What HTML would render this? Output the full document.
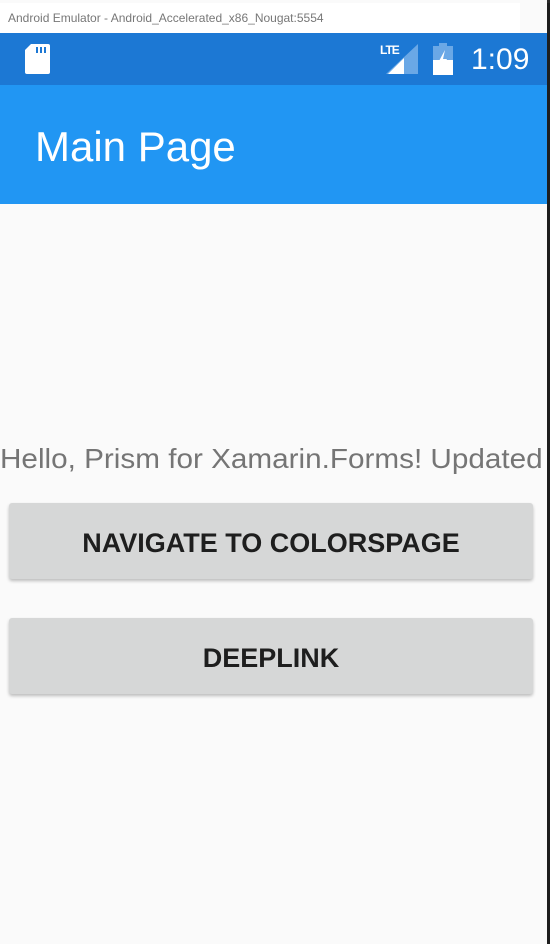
<!DOCTYPE html>
<html><head><style>
html,body{margin:0;padding:0;width:550px;height:944px;overflow:hidden;background:#1e1e1e;font-family:"Liberation Sans",sans-serif;}
#win{position:absolute;left:0;top:0;width:547px;height:944px;background:#fafafa;}
#top{position:absolute;left:0;top:0;width:550px;height:3px;background:#2b2b2b;}
#title{position:absolute;left:0;top:3px;width:520px;height:30px;background:#fff;font-size:12px;color:#777;line-height:30px;padding-left:8px;box-sizing:border-box;}
#status{position:absolute;left:0;top:33px;width:547px;height:52px;background:#1c78d4;}
#bar{position:absolute;left:0;top:85px;width:547px;height:119px;background:#2196f3;}
#bar span{position:absolute;left:35px;top:38px;font-size:42px;color:#fff;}
.time{position:absolute;left:471px;top:10px;font-size:30px;color:#fff;}
.hello{position:absolute;left:0;top:443px;font-size:28px;color:#757575;white-space:nowrap;transform:scaleX(1.06);transform-origin:left;}
.btn{position:absolute;left:9px;width:524px;height:76px;background:#d6d7d7;border-radius:3px;box-shadow:0 2px 3px rgba(0,0,0,.25);text-align:center;line-height:80px;font-size:27px;color:#1e1e1e;font-weight:bold;}
</style></head><body>
<div id="top"></div>
<div id="win">
<div id="title">Android Emulator - Android_Accelerated_x86_Nougat:5554</div>
<div id="status">
<svg style="position:absolute;left:25px;top:11px" width="25" height="30" viewBox="0 0 25 30"><path d="M6 0H23Q25 0 25 2V28Q25 30 23 30H2Q0 30 0 28V6Z" fill="#fff"/><rect x="11" y="3" width="2" height="6" fill="#1c78d4"/><rect x="15" y="3" width="2" height="6" fill="#1c78d4"/><rect x="19" y="3" width="2" height="6" fill="#1c78d4"/></svg>
<div style="position:absolute;left:380px;top:10px;font-size:12px;font-weight:bold;color:#fff;letter-spacing:-1px">LTE</div>
<svg style="position:absolute;left:386px;top:11px" width="32" height="30" viewBox="0 0 32 30"><path d="M32 0V30H0Z" fill="#6aa8e6"/><path d="M18 14V30H2Z" fill="#fff"/></svg>
<svg style="position:absolute;left:433px;top:10px" width="20" height="32" viewBox="0 0 20 32"><rect x="6" y="0" width="8" height="3" fill="#6aa8e6"/><rect x="0" y="3" width="20" height="29" fill="#6aa8e6"/><rect x="0" y="17" width="20" height="15" fill="#fff"/><path d="M12 7L6 18H10L8 28L14 16H10Z" fill="#fff"/></svg>
<div class="time">1:09</div>
</div>
<div id="bar"><span>Main Page</span></div>
<div class="hello">Hello, Prism for Xamarin.Forms! Updated</div>
<div class="btn" style="top:503px">NAVIGATE TO COLORSPAGE</div>
<div class="btn" style="top:618px">DEEPLINK</div>
</div>
</body></html>
